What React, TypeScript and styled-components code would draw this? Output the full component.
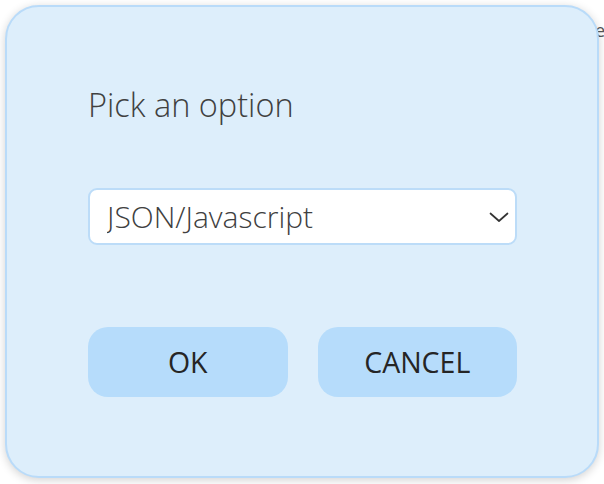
import React, { useState } from "react";
import styled, { createGlobalStyle } from "styled-components";

const Global = createGlobalStyle`
  html, body { margin: 0; padding: 0; background: #ffffff; }
  body { font-family: "Open Sans", "Liberation Sans", sans-serif; width: 604px; height: 484px; overflow: hidden; }
`;

const Page = styled.div`
  position: relative;
  width: 604px;
  height: 484px;
`;

const BackText = styled.p`
  margin: 0;
  padding-top: 18px;
  text-align: right;
  margin-right: -1px;
  font-size: 18px;
  color: #555;
`;

const Dialog = styled.div`
  position: absolute;
  left: 5px;
  top: 5px;
  width: 594px;
  height: 473px;
  box-sizing: border-box;
  background: #ddeefb;
  border: 2px solid #b9dbf9;
  border-radius: 34px;
  box-shadow: 0 2px 10px rgba(0, 0, 0, 0.18);
  padding: 79px 80px 0 81px;
  display: flex;
  flex-direction: column;
`;

const Title = styled.h2`
  margin: 0;
  font-weight: 300;
  font-size: 32.5px;
  color: #404040;
  line-height: 38px;
`;

const SelectBox = styled.label`
  margin-top: 64px;
  position: relative;
  display: flex;
  align-items: center;
  height: 57px;
  box-sizing: border-box;
  background: #fff;
  border: 2px solid #bcdcf8;
  border-radius: 9px;
  padding: 0 17px;
`;

const NativeSelect = styled.select`
  appearance: none;
  border: none;
  outline: none;
  background: transparent;
  font-family: inherit;
  font-weight: 300;
  font-size: 30px;
  color: #404040;
  width: 100%;
  height: 100%;
  padding: 0;
  cursor: pointer;
`;

const Chevron = styled.svg`
  position: absolute;
  right: 5px;
  top: 50%;
  transform: translateY(-50%);
  pointer-events: none;
`;

const Buttons = styled.div`
  margin-top: 82px;
  display: flex;
  gap: 30px;
`;

const Button = styled.button`
  width: 200px;
  height: 70px;
  border: none;
  border-radius: 20px;
  background: #b6dcfb;
  font-family: inherit;
  font-weight: 400;
  font-size: 28.5px;
  color: #252525;
  cursor: pointer;
  padding: 0;
`;

export default function App() {
  const [value, setValue] = useState("json");
  return (
    <>
      <Global />
      <Page>
        <BackText>Choose a format to continue</BackText>
        <Dialog role="dialog">
          <Title>Pick an option</Title>
          <SelectBox>
            <NativeSelect value={value} onChange={(e) => setValue(e.target.value)}>
              <option value="json">JSON/Javascript</option>
              <option value="csv">CSV</option>
              <option value="xml">XML</option>
            </NativeSelect>
            <Chevron width="22" height="22" viewBox="0 0 22 22" fill="none" stroke="#333" strokeWidth="1.7" strokeLinecap="round" strokeLinejoin="round">
              <polyline points="2.5 7.5 11 15 19.5 7.5" />
            </Chevron>
          </SelectBox>
          <Buttons>
            <Button>OK</Button>
            <Button>CANCEL</Button>
          </Buttons>
        </Dialog>
      </Page>
    </>
  );
}
